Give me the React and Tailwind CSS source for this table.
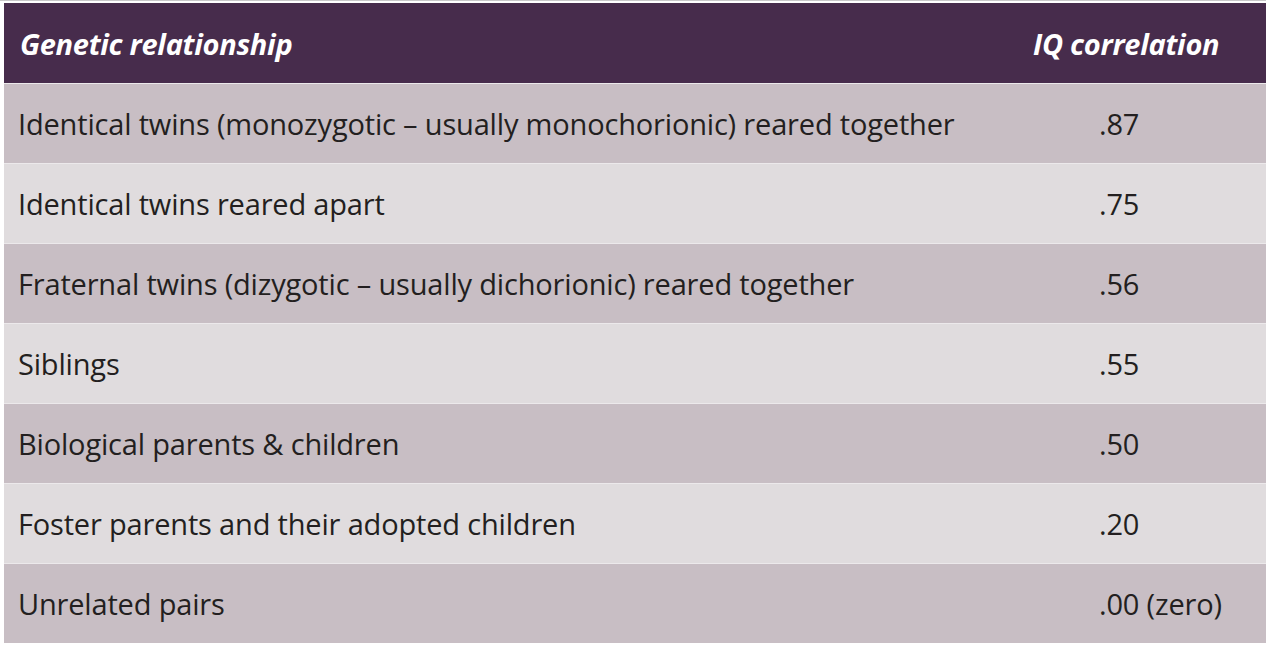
const rows = [
  ['Identical twins (monozygotic – usually monochorionic) reared together', '.87'],
  ['Identical twins reared apart', '.75'],
  ['Fraternal twins (dizygotic – usually dichorionic) reared together', '.56'],
  ['Siblings', '.55'],
  ['Biological parents & children', '.50'],
  ['Foster parents and their adopted children', '.20'],
  ['Unrelated pairs', '.00 (zero)'],
]

export default function App() {
  return (
    <div className="h-[648px] w-[1266px] bg-white border-t border-[#c9c9c9] pt-[2px] pl-[4px] font-['Open_Sans',sans-serif] text-[#231f20]">
      <div className="grid grid-cols-[1fr_233px] h-[80px] items-center pt-[2px] bg-[#472c4c] text-white italic font-bold text-[29px] tracking-[-0.01em]">
        <div className="pl-[16px]">Genetic relationship</div>
        <div>IQ correlation</div>
      </div>
      {rows.map(([rel, iq], i) => (
        <div
          key={rel}
          className={`grid grid-cols-[1fr_233px] h-[80px] items-center text-[29px] tracking-[-0.006em] border-t border-[#ece9eb] ${
            i % 2 === 0 ? 'bg-[#c8bec4]' : 'bg-[#e0dcde]'
          }`}
        >
          <div className="pl-[14px]">{rel}</div>
          <div className="pl-[66px]">{iq}</div>
        </div>
      ))}
    </div>
  )
}
